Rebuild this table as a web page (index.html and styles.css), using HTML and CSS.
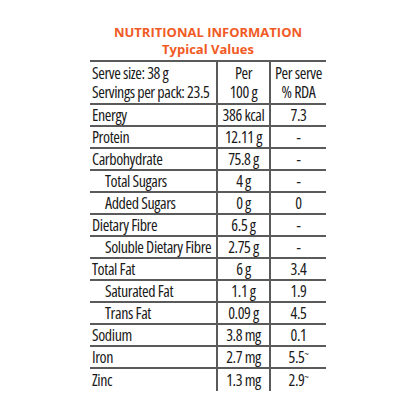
FILE: index.html
```html
<!DOCTYPE html>
<html lang="en">
<head>
    <meta charset="UTF-8">
    <meta name="viewport" content="width=device-width, initial-scale=1.0">
    <title>Nutritional Information</title>
    <link rel="stylesheet" href="styles.css">
</head>
<body>

    <div class="panel">
        <h2 class="title">NUTRITIONAL INFORMATION<br>Typical Values</h2>

        <table class="facts">
            <tr class="head">
                <td>Serve size: 38 g<br>Servings per pack: 23.5</td>
                <td class="mid">Per<br>100 g</td>
                <td class="mid">Per serve<br>% RDA</td>
            </tr>
            <tr><td>Energy</td><td class="mid">386 kcal</td><td class="mid">7.3</td></tr>
            <tr><td>Protein</td><td class="mid">12.11 g</td><td class="mid">-</td></tr>
            <tr><td>Carbohydrate</td><td class="mid">75.8 g</td><td class="mid">-</td></tr>
            <tr><td class="sub">Total Sugars</td><td class="mid">4 g</td><td class="mid">-</td></tr>
            <tr><td class="sub">Added Sugars</td><td class="mid">0 g</td><td class="mid">0</td></tr>
            <tr><td>Dietary Fibre</td><td class="mid">6.5 g</td><td class="mid">-</td></tr>
            <tr><td class="sub">Soluble Dietary Fibre</td><td class="mid">2.75 g</td><td class="mid">-</td></tr>
            <tr><td>Total Fat</td><td class="mid">6 g</td><td class="mid">3.4</td></tr>
            <tr><td class="sub">Saturated Fat</td><td class="mid">1.1 g</td><td class="mid">1.9</td></tr>
            <tr><td class="sub">Trans Fat</td><td class="mid">0.09 g</td><td class="mid">4.5</td></tr>
            <tr><td>Sodium</td><td class="mid">3.8 mg</td><td class="mid">0.1</td></tr>
            <tr><td>Iron</td><td class="mid">2.7 mg</td><td class="mid">5.5<sup>~</sup></td></tr>
            <tr class="last"><td>Zinc</td><td class="mid">1.3 mg</td><td class="mid">2.9<sup>~</sup></td></tr>
        </table>
    </div>

</body>
</html>
```

FILE: styles.css
```css
body {
    margin: 0;
    padding: 0;
    background-color: #fff;
    font-family: 'Open Sans', 'DejaVu Sans Condensed', sans-serif;
}

.panel {
    width: 236px;
    margin: 0 auto;
    padding-top: 24px;
}

.title {
    margin: 0 0 2px 0;
    text-align: center;
    font-family: 'Open Sans', sans-serif;
    font-weight: 700;
    font-size: 13px;
    line-height: 17px;
    color: #f15a24;
}

.facts {
    width: 236px;
    table-layout: fixed;
    border-collapse: collapse;
    border-top: 2px solid #5a5a5a;
    font-size: 16px;
    font-weight: 500;
    font-stretch: 75%;
    letter-spacing: -0.4px;
    color: #1a1a1a;
}

.facts td {
    height: 20px;
    padding: 0 2px;
    line-height: 20px;
    border-bottom: 2px solid #5a5a5a;
    white-space: nowrap;
    overflow: hidden;
}

.facts td + td {
    border-left: 2px solid #5a5a5a;
}

.facts td:nth-child(1) {
    width: 122px;
}

.facts td:nth-child(2) {
    width: 47px;
}

.facts .head td {
    height: 39px;
    line-height: 19px;
    padding-top: 2px;
    vertical-align: top;
}

.facts .last td {
    border-bottom: none;
    height: 22px;
}

.mid {
    text-align: center;
}

.sub {
    padding-left: 15px !important;
}

sup {
    font-size: 10px;
    line-height: 0;
    vertical-align: 5px;
}
```
